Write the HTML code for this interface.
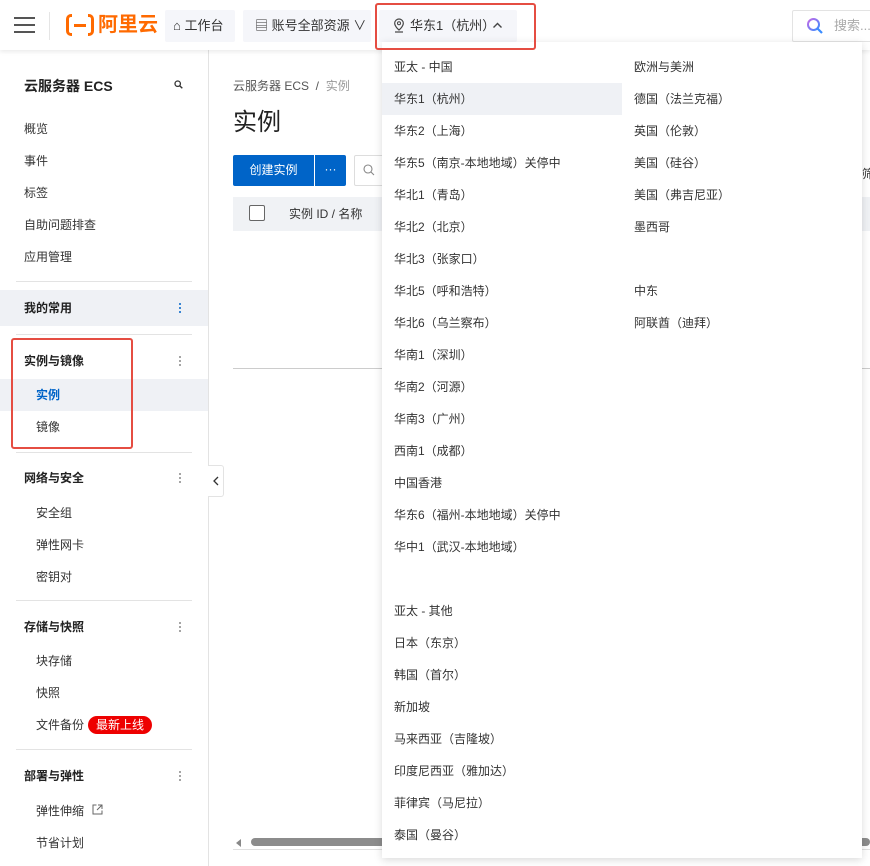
<!DOCTYPE html>
<html><head><meta charset="utf-8"><style>
*{margin:0;padding:0;box-sizing:border-box}
body{width:870px;height:866px;overflow:hidden;background:#fff;font-family:"Liberation Sans","Noto Sans CJK SC",sans-serif;color:#333;position:relative;font-size:12px}
.a{position:absolute;white-space:nowrap}
.t{position:absolute;white-space:nowrap;line-height:16px}
.s{font-size:12px;color:#333}
.h{font-size:12px;font-weight:bold;color:#222}
.div{position:absolute;left:16px;width:176px;height:1px;background:#e3e3e3}
.dots{position:absolute;left:179px;width:3px}
.dots i{display:block;width:2px;height:2px;background:#888;margin-bottom:2px;border-radius:1px}
.dd .t{font-size:12px;color:#333}
</style></head><body>
<!-- top bar -->
<div class="a" style="left:0;top:0;width:870px;height:50px;background:#fff;box-shadow:0 2px 4px rgba(0,0,0,.08);z-index:5">
 <div class="a" style="left:14px;top:17px;width:21px;height:2px;background:#555"></div>
 <div class="a" style="left:14px;top:24px;width:21px;height:2px;background:#555"></div>
 <div class="a" style="left:14px;top:31px;width:21px;height:2px;background:#555"></div>
 <div class="a" style="left:49px;top:12px;width:1px;height:28px;background:#e5e5e5"></div>
 <div class="a" style="left:66px;top:14px;width:28px;height:22px;border:3px solid #ff6a00;border-radius:5px"></div>
 <div class="a" style="left:74px;top:24px;width:12px;height:3px;background:#ff6a00"></div>
 <div class="a" style="left:72px;top:11px;width:16px;height:28px;background:#fff"></div>
 <div class="a" style="left:74px;top:24px;width:12px;height:3px;background:#ff6a00"></div>
 <div class="a" style="left:98px;top:12px;font-size:20px;font-weight:bold;color:#ff6a00;line-height:26px">阿里云</div>
 <div class="a" style="left:165px;top:10px;width:70px;height:32px;background:#f5f6fa;border-radius:2px"></div>
 <div class="t" style="left:173px;top:18px;font-size:13px">⌂ 工作台</div>
 <div class="a" style="left:243px;top:10px;width:128px;height:32px;background:#f5f6fa;border-radius:2px"></div>
 <div class="t" style="left:255px;top:18px;font-size:13px">▤ 账号全部资源 ∨</div>
 <div class="a" style="left:379px;top:10px;width:138px;height:32px;background:#f5f6fa;border-radius:2px"></div>
 <svg class="a" style="left:393px;top:18px" width="12" height="15" viewBox="0 0 12 15"><path d="M6 1a4.3 4.3 0 0 0-4.3 4.3C1.7 8.5 6 12 6 12s4.3-3.5 4.3-6.7A4.3 4.3 0 0 0 6 1z" fill="none" stroke="#444" stroke-width="1.2"/><circle cx="6" cy="5.3" r="1.5" fill="none" stroke="#444"/><path d="M2 14h8" stroke="#444" stroke-width="1.2"/></svg>
 <div class="t" style="left:410px;top:18px;font-size:13px">华东1（杭州）</div>
 <svg class="a" style="left:492px;top:21px" width="11" height="8" viewBox="0 0 11 8"><path d="M1.5 6.5L5.5 2.5L9.5 6.5" fill="none" stroke="#444" stroke-width="1.4"/></svg>
 <div class="a" style="left:792px;top:10px;width:80px;height:32px;border:1px solid #e3e3e3;border-radius:2px"></div>
 <svg class="a" style="left:806px;top:17px" width="18" height="18" viewBox="0 0 18 18"><defs><linearGradient id="g" x1="0" y1="0" x2="1" y2="1"><stop offset="0" stop-color="#c56ae6"/><stop offset="1" stop-color="#3a8cff"/></linearGradient></defs><circle cx="7.5" cy="7.5" r="5.5" fill="none" stroke="url(#g)" stroke-width="2"/><path d="M11.5 11.5L16 16" stroke="#3a8cff" stroke-width="2.2"/></svg>
 <div class="t" style="left:834px;top:18px;font-size:13px;color:#aaa">搜索...</div>
</div>
<div class="a" style="left:375px;top:3px;width:161px;height:47px;border:2px solid #e54d42;border-radius:3px;z-index:7"></div>
<!-- sidebar -->
<div class="a" style="left:208px;top:50px;width:1px;height:816px;background:#e3e3e3"></div>
<div class="t" style="left:24px;top:78px;font-size:14px;font-weight:bold;color:#222">云服务器 ECS</div>
<svg class="a" style="left:174px;top:80px" width="9" height="9" viewBox="0 0 9 9"><circle cx="3.7" cy="3.7" r="2.7" fill="none" stroke="#333" stroke-width="1.3"/><path d="M5.7 5.7L8.3 8.3" stroke="#333" stroke-width="1.4"/></svg>
<div class="t s" style="left:24px;top:121px">概览</div>
<div class="t s" style="left:24px;top:153px">事件</div>
<div class="t s" style="left:24px;top:185px">标签</div>
<div class="t s" style="left:24px;top:217px">自助问题排查</div>
<div class="t s" style="left:24px;top:249px">应用管理</div>
<div class="div" style="top:281px"></div>
<div class="a" style="left:0;top:290px;width:208px;height:36px;background:#eff1f5"></div>
<div class="t h" style="left:24px;top:300px">我的常用</div>
<div class="dots" style="top:303px"><i style="background:#0064c8"></i><i style="background:#0064c8"></i><i style="background:#0064c8"></i></div>
<div class="div" style="top:334px"></div>
<div class="t h" style="left:24px;top:353px">实例与镜像</div>
<div class="dots" style="top:356px"><i></i><i></i><i></i></div>
<div class="a" style="left:0;top:379px;width:208px;height:32px;background:#eff1f5"></div>
<div class="t" style="left:36px;top:387px;color:#0064c8;font-weight:bold">实例</div>
<div class="t s" style="left:36px;top:419px">镜像</div>
<div class="a" style="left:11px;top:338px;width:122px;height:111px;border:2px solid #e54d42;border-radius:3px"></div>
<div class="div" style="top:452px"></div>
<div class="t h" style="left:24px;top:470px">网络与安全</div>
<div class="dots" style="top:473px"><i></i><i></i><i></i></div>
<div class="t s" style="left:36px;top:505px">安全组</div>
<div class="t s" style="left:36px;top:537px">弹性网卡</div>
<div class="t s" style="left:36px;top:569px">密钥对</div>
<div class="div" style="top:600px"></div>
<div class="t h" style="left:24px;top:619px">存储与快照</div>
<div class="dots" style="top:622px"><i></i><i></i><i></i></div>
<div class="t s" style="left:36px;top:653px">块存储</div>
<div class="t s" style="left:36px;top:685px">快照</div>
<div class="t s" style="left:36px;top:717px">文件备份</div>
<div class="a" style="left:88px;top:716px;width:64px;height:18px;background:#e00;border-radius:9px;color:#fff;font-size:12px;line-height:18px;text-align:center">最新上线</div>
<div class="div" style="top:749px"></div>
<div class="t h" style="left:24px;top:768px">部署与弹性</div>
<div class="dots" style="top:771px"><i></i><i></i><i></i></div>
<div class="t s" style="left:36px;top:803px">弹性伸缩</div>
<svg class="a" style="left:92px;top:804px" width="11" height="11" viewBox="0 0 11 11"><path d="M4.5 1H1v9h9V6.5M6 1h4v4M10 1L5 6" fill="none" stroke="#666" stroke-width="1"/></svg>
<div class="t s" style="left:36px;top:835px">节省计划</div>
<div class="a" style="left:208px;top:465px;width:16px;height:32px;background:#fff;border:1px solid #e3e3e3;border-left:none;border-radius:0 3px 3px 0"></div>
<svg class="a" style="left:212px;top:476px" width="8" height="10" viewBox="0 0 8 10"><path d="M6 1L2 5l4 4" fill="none" stroke="#333" stroke-width="1.3"/></svg>
<!-- main -->
<div class="t" style="left:233px;top:78px;font-size:12px;color:#555">云服务器 ECS &nbsp;/&nbsp; <span style="color:#999">实例</span></div>
<div class="t" style="left:233px;top:108px;font-size:24px;line-height:30px;color:#222">实例</div>
<div class="a" style="left:233px;top:155px;width:81px;height:31px;background:#0064c8;border-radius:2px 0 0 2px;color:#fff;font-size:12px;line-height:31px;text-align:center">创建实例</div>
<div class="a" style="left:315px;top:155px;width:31px;height:31px;background:#0064c8;border-radius:0 2px 2px 0;color:#fff;font-size:12px;line-height:28px;text-align:center">···</div>
<div class="a" style="left:354px;top:155px;width:40px;height:31px;border:1px solid #ddd;border-radius:2px"></div>
<svg class="a" style="left:363px;top:164px" width="12" height="12" viewBox="0 0 12 12"><circle cx="5" cy="5" r="4" fill="none" stroke="#888" stroke-width="1.1"/><path d="M8 8l3 3" stroke="#888" stroke-width="1.1"/></svg>
<div class="a" style="left:233px;top:197px;width:637px;height:34px;background:#f0f2f5"></div>
<div class="a" style="left:249px;top:205px;width:16px;height:16px;border:1px solid #666;border-radius:2px;background:#fff"></div>
<div class="t" style="left:289px;top:206px;font-size:12px;color:#333">实例 ID / 名称</div>
<div class="a" style="left:233px;top:368px;width:637px;height:1px;background:#ccc"></div>
<div class="a" style="left:233px;top:836px;width:637px;height:14px;border-bottom:1px solid #e0e0e0"></div>
<div class="a" style="left:236px;top:839px;width:0;height:0;border-top:4px solid transparent;border-bottom:4px solid transparent;border-right:5px solid #888"></div>
<div class="a" style="left:251px;top:838px;width:619px;height:8px;background:#8c8c8c;border-radius:4px"></div>
<div class="t" style="left:862px;top:166px;font-size:12px">筛</div>
<!-- dropdown -->
<div class="a dd" style="left:382px;top:42px;width:480px;height:816px;background:#fff;box-shadow:0 2px 8px rgba(0,0,0,.15);z-index:6">
 <div class="a" style="left:0;top:41px;width:240px;height:32px;background:#eff1f5"></div>
 <div class="t" style="left:12px;top:17px">亚太 - 中国</div>
 <div class="t" style="left:12px;top:49px">华东1（杭州）</div>
 <div class="t" style="left:12px;top:81px">华东2（上海）</div>
 <div class="t" style="left:12px;top:113px">华东5（南京-本地地域）关停中</div>
 <div class="t" style="left:12px;top:145px">华北1（青岛）</div>
 <div class="t" style="left:12px;top:177px">华北2（北京）</div>
 <div class="t" style="left:12px;top:209px">华北3（张家口）</div>
 <div class="t" style="left:12px;top:241px">华北5（呼和浩特）</div>
 <div class="t" style="left:12px;top:273px">华北6（乌兰察布）</div>
 <div class="t" style="left:12px;top:305px">华南1（深圳）</div>
 <div class="t" style="left:12px;top:337px">华南2（河源）</div>
 <div class="t" style="left:12px;top:369px">华南3（广州）</div>
 <div class="t" style="left:12px;top:401px">西南1（成都）</div>
 <div class="t" style="left:12px;top:433px">中国香港</div>
 <div class="t" style="left:12px;top:465px">华东6（福州-本地地域）关停中</div>
 <div class="t" style="left:12px;top:497px">华中1（武汉-本地地域）</div>
 <div class="t" style="left:12px;top:561px">亚太 - 其他</div>
 <div class="t" style="left:12px;top:593px">日本（东京）</div>
 <div class="t" style="left:12px;top:625px">韩国（首尔）</div>
 <div class="t" style="left:12px;top:657px">新加坡</div>
 <div class="t" style="left:12px;top:689px">马来西亚（吉隆坡）</div>
 <div class="t" style="left:12px;top:721px">印度尼西亚（雅加达）</div>
 <div class="t" style="left:12px;top:753px">菲律宾（马尼拉）</div>
 <div class="t" style="left:12px;top:785px">泰国（曼谷）</div>
 <div class="t" style="left:252px;top:17px">欧洲与美洲</div>
 <div class="t" style="left:252px;top:49px">德国（法兰克福）</div>
 <div class="t" style="left:252px;top:81px">英国（伦敦）</div>
 <div class="t" style="left:252px;top:113px">美国（硅谷）</div>
 <div class="t" style="left:252px;top:145px">美国（弗吉尼亚）</div>
 <div class="t" style="left:252px;top:177px">墨西哥</div>
 <div class="t" style="left:252px;top:241px">中东</div>
 <div class="t" style="left:252px;top:273px">阿联酋（迪拜）</div>
</div>
</body></html>
